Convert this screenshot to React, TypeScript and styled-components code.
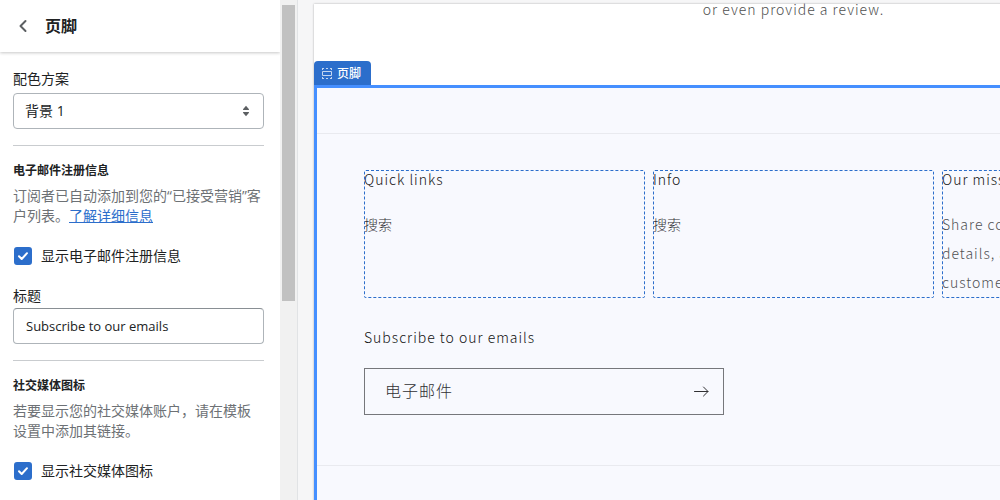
import React from "react";
import styled, { createGlobalStyle } from "styled-components";

const GlobalStyle = createGlobalStyle`
  *, *::before, *::after { box-sizing: border-box; }
  body {
    margin: 0;
    color: #202223;
    background: #f6f6f7;
    font-family: "Open Sans", "Noto Sans CJK SC", sans-serif;
    font-size: 14px;
    line-height: 20px;
  }
  h1, h2, h3, p, ul { margin: 0; padding: 0; }
  ul { list-style: none; }
  button, input, select { font: inherit; color: inherit; }
`;

const Editor = styled.div`
  display: flex;
  height: 100vh;
  overflow: hidden;
`;

const Sidebar = styled.aside`
  display: flex;
  flex: none;
  border-right: 1px solid #e1e3e5;
  background: #fff;
`;

const Panel = styled.div`
  width: 280px;
`;

const PanelHeader = styled.header`
  display: flex;
  align-items: center;
  gap: 8px;
  height: 52px;
  padding: 0 9px;
  box-shadow: 0 1px 3px rgba(0, 0, 0, 0.22);
  clip-path: inset(0 0 -6px 0);
`;

const BackButton = styled.button`
  display: grid;
  place-items: center;
  width: 28px;
  height: 28px;
  padding: 0;
  border: 0;
  background: none;
`;

const PanelTitle = styled.h1`
  font-size: 16px;
  line-height: 24px;
  font-weight: 600;
`;

const Section = styled.section`
  margin: 0 16px 0 13px;
  padding: 15px 0 16px;

  & + & {
    border-top: 1px solid #c9cccf;
  }
`;

const SectionTitle = styled.h2`
  font-size: 12px;
  line-height: 20px;
  font-weight: 700;
`;

const Help = styled.p`
  margin-top: 5px;
  color: #6d7175;
`;

const HelpLink = styled.a`
  color: #2c6ecb;
  text-decoration: underline;
`;

const Field = styled.div<{ $spaced?: boolean }>`
  display: flex;
  flex-direction: column;
  gap: ${(p) => (p.$spaced ? "2px" : "4px")};
  margin-top: ${(p) => (p.$spaced ? "20px" : "2px")};
`;

const Control = styled.div`
  position: relative;
  display: flex;
  align-items: center;
`;

const Select = styled.select`
  appearance: none;
  width: 100%;
  height: 36px;
  padding: 0 36px 0 11px;
  border: 1px solid #aeb4b9;
  border-radius: 4px;
  background: #fff;
`;

const SelectArrows = styled.svg`
  position: absolute;
  right: 14px;
  pointer-events: none;
`;

const TextInput = styled.input`
  width: 100%;
  height: 36px;
  padding: 0 12px;
  border: 1px solid #aeb4b9;
  border-top-color: #898f94;
  border-radius: 4px;
  background: #fff;
  font-size: 13px;
`;

const CheckRow = styled.label`
  display: flex;
  align-items: center;
  gap: 9px;
  margin: 20px 0 0 1px;
`;

const CheckSlot = styled.span`
  display: grid;
  place-items: center;

  & > * {
    grid-area: 1 / 1;
  }
`;

const CheckInput = styled.input`
  appearance: none;
  width: 18px;
  height: 18px;
  margin: 0;
  border: 2px solid #8c9196;
  border-radius: 3px;

  &:checked {
    border-color: #2c6ecb;
    background: #2c6ecb;
  }

  &:not(:checked) + svg {
    display: none;
  }
`;

const CheckMark = styled.svg`
  pointer-events: none;
`;

const ScrollTrack = styled.div`
  width: 17px;
  padding: 5px 2px;
  background: #f1f1f1;
`;

const ScrollThumb = styled.div`
  height: 296px;
  background: #c1c1c1;
`;

const Preview = styled.main`
  flex: 1;
  min-width: 0;
  padding: 4px 0 0 16px;
  overflow: hidden;
  color: #121212;
  font-family: "Noto Sans CJK SC", sans-serif;
  font-weight: 300;
  letter-spacing: 1px;
`;

const StorePage = styled.div`
  width: 100%;
  min-width: 959px;
  min-height: 100%;
  background: #fff;
  box-shadow: 0 0 2px rgba(0, 0, 0, 0.3);
`;

const ReviewText = styled.p`
  height: 57px;
  color: #505050;
  line-height: 11px;
  text-align: center;
`;

const SectionTag = styled.div`
  display: flex;
  align-items: center;
  gap: 5px;
  width: 57px;
  height: 24px;
  padding-left: 8px;
  border-radius: 4px 4px 0 0;
  background: #2c6ecb;
  color: #fff;
  font-size: 12px;
  font-weight: 500;
  letter-spacing: 0;
`;

const Footer = styled.footer`
  border: 3px solid #458fff;
  background: #f8f9fe;
`;

const FooterContent = styled.div`
  margin-top: 45px;
  padding: 36px 47px 50px;
  border: 1px solid #e9eaef;
  border-width: 1px 0;
`;

const FooterEnd = styled.div`
  height: 80px;
`;

const Blocks = styled.div`
  display: grid;
  grid-template-columns: repeat(3, 1fr);
  gap: 8px;
`;

const Block = styled.section`
  min-height: 128px;
  outline: 1px dashed #2c6ecb;
  outline-offset: -1px;
  border-radius: 2px;
`;

const BlockTitle = styled.h3`
  font-size: 14px;
  line-height: 18px;
  font-weight: 300;
`;

const BlockBody = styled.div`
  margin-top: 22px;
  color: #505154;
  line-height: 29px;
`;

const StoreLink = styled.a`
  color: #303034;
  letter-spacing: 0;
  text-decoration: none;
`;

const Newsletter = styled.form`
  display: flex;
  flex-direction: column;
  gap: 22px;
  margin-top: 30px;
`;

const NewsletterLabel = styled.label`
  font-size: 14px;
  line-height: 18px;
`;

const EmailBox = styled.div`
  display: flex;
  width: 360px;
  height: 47px;
  border: 1px solid #76777b;
`;

const EmailInput = styled.input`
  flex: 1;
  min-width: 0;
  padding: 0 20px 4px;
  border: 0;
  background: none;
  font-size: 16px;
  letter-spacing: 1px;

  &::placeholder {
    color: #303034;
    opacity: 1;
  }
`;

const SubmitButton = styled.button`
  display: grid;
  place-items: center;
  width: 44px;
  padding: 0;
  border: 0;
  background: none;
`;

function Checkbox({ label }: { label: string }) {
  return (
    <CheckRow>
      <CheckSlot>
        <CheckInput type="checkbox" defaultChecked />
        <CheckMark width="12" height="10" viewBox="0 0 12 10" fill="none" stroke="#fff" strokeWidth="2" strokeLinecap="round" strokeLinejoin="round">
          <path d="M2 5.2 4.7 8 10 2.2" />
        </CheckMark>
      </CheckSlot>
      {label}
    </CheckRow>
  );
}

function LinkBlock({ title }: { title: string }) {
  return (
    <Block>
      <BlockTitle>{title}</BlockTitle>
      <BlockBody as="ul">
        <li>
          <StoreLink href="#search">搜索</StoreLink>
        </li>
      </BlockBody>
    </Block>
  );
}

export default function App() {
  return (
    <>
      <GlobalStyle />
      <Editor lang="zh-CN">
        <Sidebar>
          <Panel>
            <PanelHeader>
              <BackButton type="button" aria-label="返回">
                <svg width="10" height="14" viewBox="0 0 10 14" fill="none" stroke="#5c5f62" strokeWidth="2" strokeLinecap="round" strokeLinejoin="round">
                  <path d="M7.5 2 2.5 7l5 5" />
                </svg>
              </BackButton>
              <PanelTitle>页脚</PanelTitle>
            </PanelHeader>

            <Section>
              <Field>
                <label htmlFor="scheme">配色方案</label>
                <Control>
                  <Select id="scheme" defaultValue="background-1">
                    <option value="background-1">背景 1</option>
                  </Select>
                  <SelectArrows width="8" height="12" viewBox="0 0 8 12" fill="#5c5f62">
                    <path d="M4 .8 7 4.2q.3.8-.5.8h-5Q.7 5 1 4.2ZM4 11.2 7 7.8q.3-.8-.5-.8h-5Q.7 7 1 7.8Z" />
                  </SelectArrows>
                </Control>
              </Field>
            </Section>

            <Section>
              <SectionTitle>电子邮件注册信息</SectionTitle>
              <Help>
                订阅者已自动添加到您的“已接受营销”客户列表。<HelpLink href="#learn-more">了解详细信息</HelpLink>
              </Help>
              <Checkbox label="显示电子邮件注册信息" />
              <Field $spaced>
                <label htmlFor="heading">标题</label>
                <TextInput id="heading" type="text" defaultValue="Subscribe to our emails" />
              </Field>
            </Section>

            <Section>
              <SectionTitle>社交媒体图标</SectionTitle>
              <Help>若要显示您的社交媒体账户，请在模板设置中添加其链接。</Help>
              <Checkbox label="显示社交媒体图标" />
            </Section>
          </Panel>
          <ScrollTrack>
            <ScrollThumb />
          </ScrollTrack>
        </Sidebar>

        <Preview>
          <StorePage>
            <ReviewText>or even provide a review.</ReviewText>
            <SectionTag>
              <svg width="10" height="11" viewBox="0 0 10 11" fill="none" stroke="#c3d6f1">
                <path d="M0 .5h2M4 .5h2M8 .5h2M0 10.5h2M4 10.5h2M8 10.5h2M.5 0v2M9.500 0v2M.5 9v2M9.500 9v2M.5 3.500h9v4h-9z" />
              </svg>
              页脚
            </SectionTag>
            <Footer>
              <FooterContent>
                <Blocks>
                  <LinkBlock title="Quick links" />
                  <LinkBlock title="Info" />
                  <Block>
                    <BlockTitle>Our mission</BlockTitle>
                    <BlockBody as="p">
                      Share contact information, store details, and brand content with your customers.
                    </BlockBody>
                  </Block>
                </Blocks>
                <Newsletter>
                  <NewsletterLabel htmlFor="email">Subscribe to our emails</NewsletterLabel>
                  <EmailBox>
                    <EmailInput id="email" type="email" placeholder="电子邮件" />
                    <SubmitButton type="button" aria-label="订阅">
                      <svg width="16" height="12" viewBox="0 0 16 12" fill="none" stroke="#303033" strokeLinecap="round" strokeLinejoin="round">
                        <path d="M1.500 5.500h13.500M10.500 1 15 5.500 10.500 10" />
                      </svg>
                    </SubmitButton>
                  </EmailBox>
                </Newsletter>
              </FooterContent>
              <FooterEnd />
            </Footer>
          </StorePage>
        </Preview>
      </Editor>
    </>
  );
}
